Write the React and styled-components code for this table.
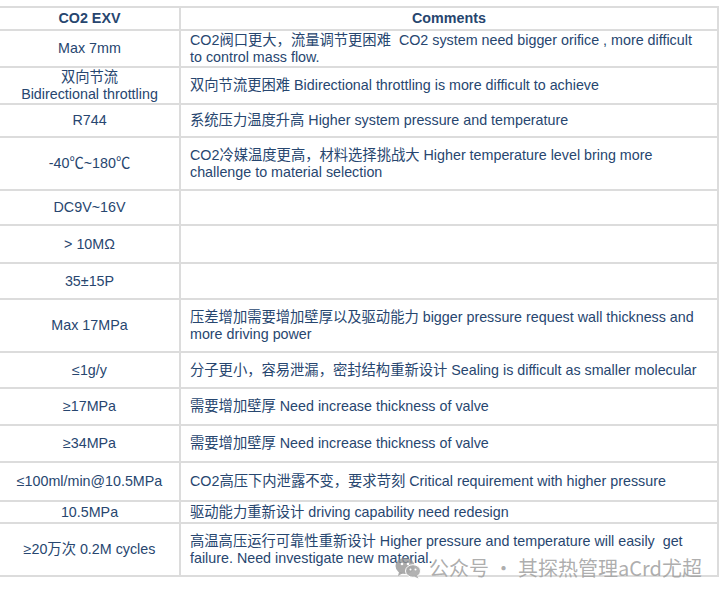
import React from 'react';
import styled, { createGlobalStyle } from 'styled-components';

const GlobalStyle = createGlobalStyle`
  body {
    margin: 0;
    background: #ffffff;
    font-family: "Liberation Sans", Arial, "Noto Sans CJK SC", sans-serif;
  }
`;

const Page = styled.div`
  position: relative;
  width: 723px;
  height: 597px;
  padding-top: 6px;
  box-sizing: border-box;
  overflow: hidden;
`;

const Table = styled.div`
  width: 719px;
  border-top: 2px solid #dcdcdc;
  border-right: 2px solid #dcdcdc;
  box-sizing: border-box;
`;

const Row = styled.div`
  display: grid;
  grid-template-columns: 181px 1fr;
  height: ${p => p.h}px;
  border-bottom: 2px solid #dcdcdc;
  box-sizing: border-box;
`;

const Spec = styled.div`
  display: flex;
  flex-direction: column;
  align-items: center;
  justify-content: center;
  border-right: 2px solid #dcdcdc;
  font-size: 14.3px;
  line-height: 17px;
  color: #27466f;
  text-align: center;
  font-weight: ${p => (p.head ? 700 : 400)};
`;

const Comment = styled.div`
  display: flex;
  flex-direction: column;
  justify-content: center;
  align-items: ${p => (p.head ? 'center' : 'flex-start')};
  padding-left: ${p => (p.head ? 0 : 9)}px;
  font-size: 14.3px;
  line-height: 17px;
  color: #27466f;
  white-space: pre;
  font-weight: ${p => (p.head ? 700 : 400)};
`;

const Watermark = styled.div`
  position: absolute;
  left: 395px;
  top: 553px;
  display: flex;
  align-items: center;
  gap: 8px;
  font-family: "Noto Sans CJK SC", sans-serif;
  font-size: 20px;
  color: rgba(160, 160, 160, 0.85);
  white-space: nowrap;
`;

const rows = [
  { h: 37, spec: ['Max 7mm'], text: ['CO2阀口更大，流量调节更困难  CO2 system need bigger orifice , more difficult', 'to control mass flow.'] },
  { h: 37, spec: ['双向节流', 'Bidirectional throttling'], text: ['双向节流更困难 Bidirectional throttling is more difficult to achieve'] },
  { h: 33, spec: ['R744'], text: ['系统压力温度升高 Higher system pressure and temperature'] },
  { h: 53, spec: ['-40℃~180℃'], text: ['CO2冷媒温度更高，材料选择挑战大 Higher temperature level bring more', 'challenge to material selection'] },
  { h: 35, spec: ['DC9V~16V'], text: [] },
  { h: 38, spec: ['> 10MΩ'], text: [] },
  { h: 36, spec: ['35±15P'], text: [] },
  { h: 53, spec: ['Max 17MPa'], text: ['压差增加需要增加壁厚以及驱动能力 bigger pressure request wall thickness and', 'more driving power'] },
  { h: 36, spec: ['≤1g/y'], text: ['分子更小，容易泄漏，密封结构重新设计 Sealing is difficult as smaller molecular'] },
  { h: 37, spec: ['≥17MPa'], text: ['需要增加壁厚 Need increase thickness of valve'] },
  { h: 37, spec: ['≥34MPa'], text: ['需要增加壁厚 Need increase thickness of valve'] },
  { h: 39, spec: ['≤100ml/min@10.5MPa'], text: ['CO2高压下内泄露不变，要求苛刻 Critical requirement with higher pressure'] },
  { h: 22, spec: ['10.5MPa'], text: ['驱动能力重新设计 driving capability need redesign'] },
  { h: 53, spec: ['≥20万次 0.2M cycles'], text: ['高温高压运行可靠性重新设计 Higher pressure and temperature will easily  get', 'failure. Need investigate new material.'] },
];

const WeChatIcon = () => (
  <svg width="26" height="22" viewBox="0 0 26 22">
    <ellipse cx="10" cy="9" rx="9.5" ry="8" fill="rgba(150,150,150,0.8)" />
    <path d="M4 15 L3 19 L8 16 Z" fill="rgba(150,150,150,0.8)" />
    <circle cx="7" cy="7" r="1.3" fill="#fff" />
    <circle cx="13" cy="7" r="1.3" fill="#fff" />
    <ellipse cx="18" cy="14" rx="7.5" ry="6.3" fill="rgba(170,170,170,0.9)" stroke="#fff" strokeWidth="1" />
    <path d="M22 18.5 L23.5 21.5 L19 19.5 Z" fill="rgba(170,170,170,0.9)" />
    <circle cx="15.5" cy="12.5" r="1" fill="#fff" />
    <circle cx="20.5" cy="12.5" r="1" fill="#fff" />
  </svg>
);

export default function App() {
  return (
    <Page>
      <GlobalStyle />
      <Table>
        <Row h={23}>
          <Spec head>CO2 EXV</Spec>
          <Comment head>Comments</Comment>
        </Row>
        {rows.map((r, i) => (
          <Row key={i} h={r.h}>
            <Spec>
              {r.spec.map((s, j) => (
                <span key={j}>{s}</span>
              ))}
            </Spec>
            <Comment>
              {r.text.map((t, j) => (
                <span key={j}>{t}</span>
              ))}
            </Comment>
          </Row>
        ))}
      </Table>
      <Watermark>
        <WeChatIcon />
        <span>公众号 · 其探热管理aCrd尤超</span>
      </Watermark>
    </Page>
  );
}
